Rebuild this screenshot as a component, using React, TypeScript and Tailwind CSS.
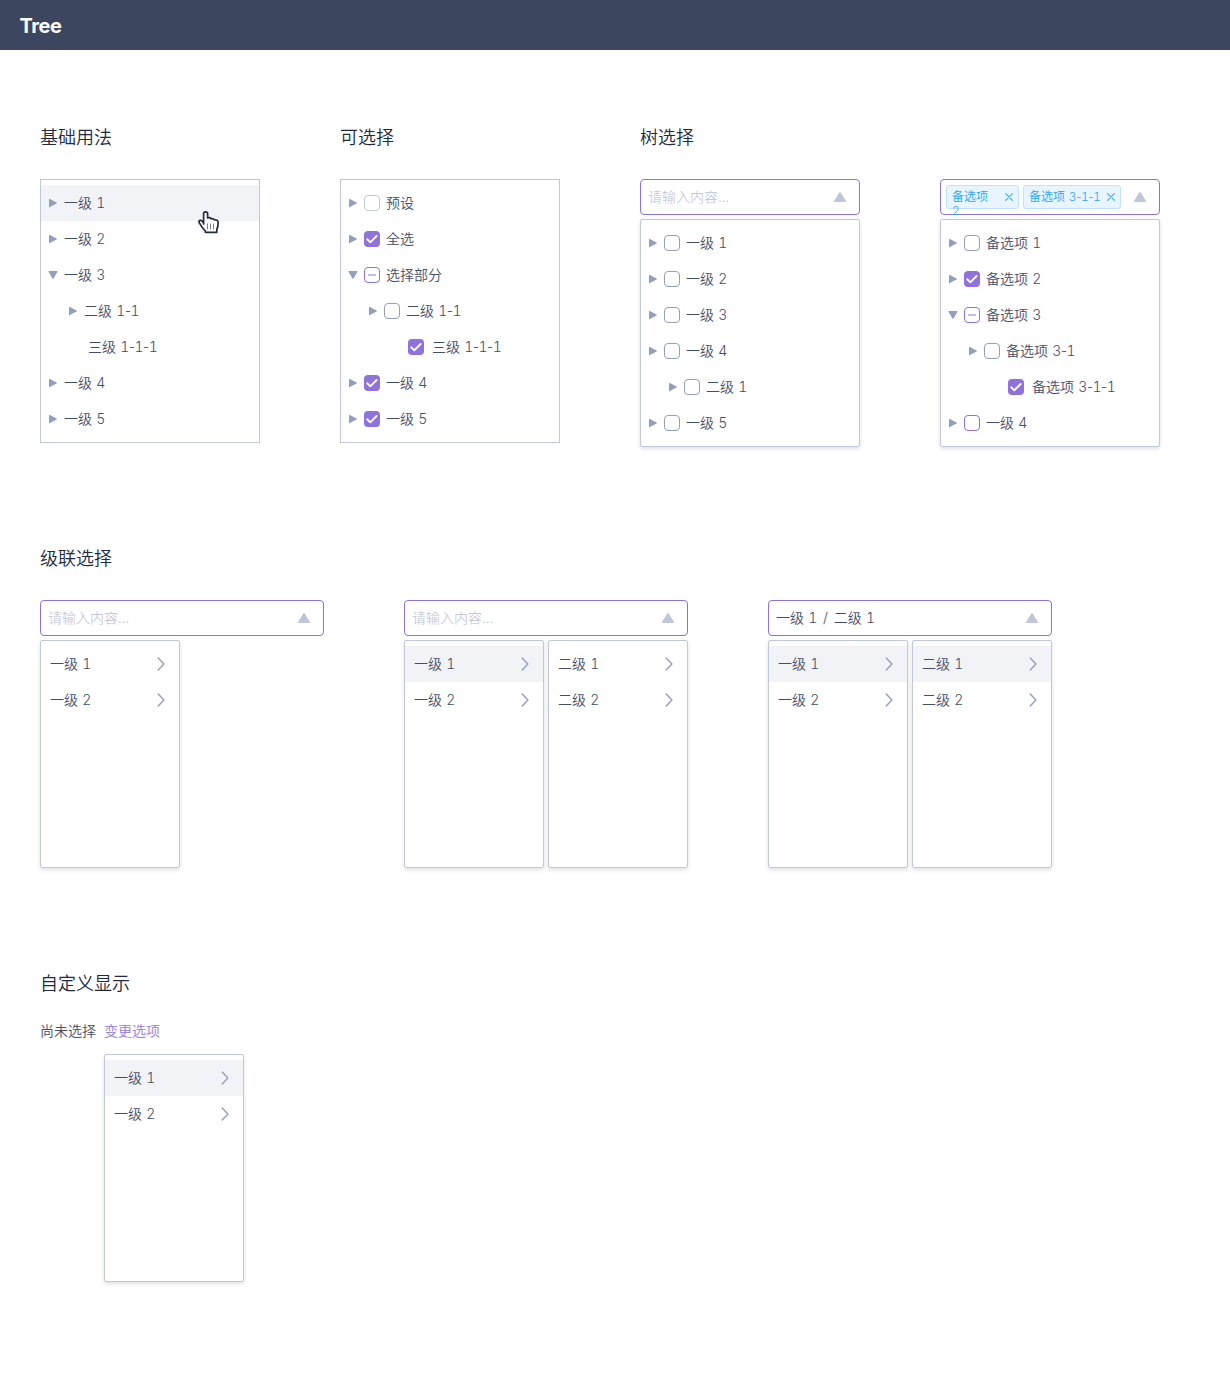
import React from "react";

type Box = "light" | "empty" | "purple" | "checked" | "partial";
type Arrow = "right" | "down";

interface Node {
  label: string;
  level?: number;
  arrow?: Arrow;
  box?: Box;
  active?: boolean;
}

function TreeArrow({ dir }: { dir: Arrow }) {
  return dir === "right" ? (
    <svg className="block h-3 w-3 shrink-0" viewBox="0 0 12 12" fill="#939fbc">
      <path d="M2 2.3Q2 1.5 2.9 1.9L9.5 5.4Q10.4 6 9.5 6.6L2.9 10.1Q2 10.5 2 9.7Z" />
    </svg>
  ) : (
    <svg className="block h-3 w-3 shrink-0" viewBox="0 0 12 12" fill="#939fbc">
      <path d="M2.1 2.1H9.9Q10.8 2.1 10.3 3L6.6 9.5Q6 10.3 5.4 9.5L1.7 3Q1.2 2.1 2.1 2.1Z" />
    </svg>
  );
}

function Checkbox({ kind }: { kind: Box }) {
  if (kind === "checked") {
    return (
      <span className="flex size-4 shrink-0 items-center justify-center rounded bg-[#8f72db]">
        <svg className="block size-4" viewBox="0 0 16 16" fill="none" stroke="#fff" strokeWidth="1.9" strokeLinecap="round" strokeLinejoin="round">
          <path d="M3.2 8.3L6.3 11.3L12.6 5" />
        </svg>
      </span>
    );
  }
  if (kind === "partial") {
    return (
      <span className="flex size-4 shrink-0 items-center justify-center rounded border border-[#8f72db] bg-white">
        <span className="h-[2px] w-2 bg-[#c7b8ed]" />
      </span>
    );
  }
  const border =
    kind === "light" ? "border-[#c0c8dc]" : kind === "purple" ? "border-[#8f72db]" : "border-[#939fbc]";
  return <span className={`size-4 shrink-0 rounded border bg-white ${border}`} />;
}

/* Tabular figures widen hyphens and slashes too, so those get their own side spacing. */
function Label({ text }: { text: string }) {
  return (
    <>
      {text.split(/([-/])/).map((part, i) =>
        part === "-" ? (
          <span key={i} className="-mx-[0.14em]">
            -
          </span>
        ) : part === "/" ? (
          <span key={i} className="mx-[1.5px]">
            /
          </span>
        ) : (
          part
        ),
      )}
    </>
  );
}

const indents = ["pl-[6px]", "pl-[26px]", "pl-[47px]", "pl-[67px]"];

function Row({ node }: { node: Node }) {
  return (
    <li className={`flex h-9 items-center ${indents[node.level ?? 0]} ${node.active ? "bg-[#f2f3f7]" : ""}`}>
      {node.arrow && <TreeArrow dir={node.arrow} />}
      {node.box && (
        <span className={node.arrow ? "ml-[5px] flex" : "flex"}>
          <Checkbox kind={node.box} />
        </span>
      )}
      <span className={node.arrow ? (node.box ? "ml-[6px]" : "ml-[5px]") : node.box ? "ml-2" : ""}>
        <Label text={node.label} />
      </span>
    </li>
  );
}

function Tree({ nodes, floating }: { nodes: Node[]; floating?: boolean }) {
  return (
    <ul
      className={`w-[220px] border border-[#c0c8dc] bg-white py-[5px] ${
        floating ? "mt-1 rounded-[2px] shadow-[0_2px_4px_rgba(0,0,0,0.12)]" : ""
      }`}
    >
      {nodes.map((n, i) => (
        <Row key={i} node={n} />
      ))}
    </ul>
  );
}

function Select({ value, placeholder, children }: { value?: string; placeholder?: string; children?: React.ReactNode }) {
  return (
    <div className="flex h-9 w-full items-center rounded border border-[#8f72db] bg-white pr-[13px]">
      {children ?? (
        <span className={`flex-1 pl-[7px] ${value ? "" : "font-light text-[#b9c0d6]"}`}>
          <Label text={value ?? placeholder ?? ""} />
        </span>
      )}
      <svg className="ml-auto block h-3 w-3 shrink-0" viewBox="0 0 12 12" fill="#c0c6d9">
        <path d="M5.2 1.6Q6 .7 6.8 1.6L11.8 9.8Q12.2 11 11.2 11H.8Q-.2 11 .2 9.8Z" />
      </svg>
    </div>
  );
}

function Tag({ label, wrap }: { label: string; wrap?: boolean }) {
  return (
    <span
      className={`flex h-6 items-start rounded-[3px] border border-[#bfe2fd] bg-[#e8f5ff] pr-[5px] pl-[5px] text-[#2ba6fa] ${
        wrap ? "w-[73px]" : "w-[98px]"
      }`}
    >
      <span className={`mt-[4px] text-[12px] leading-[14px] ${wrap ? "w-10" : "whitespace-nowrap"}`}>
        <Label text={label} />
      </span>
      <svg className="mt-[7px] ml-auto block size-2 shrink-0" viewBox="0 0 8 8" stroke="#35abfb" strokeWidth="1.1" strokeLinecap="round">
        <path d="M.6 .6L7.4 7.4M7.4 .6L.6 7.4" />
      </svg>
    </span>
  );
}

function Menu({ items, active }: { items: string[]; active?: number }) {
  return (
    <ul className="h-[228px] w-[140px] rounded-[2px] border border-[#c0c8dc] bg-white py-[5px] shadow-[0_2px_4px_rgba(0,0,0,0.12)]">
      {items.map((t, i) => (
        <li key={t} className={`flex h-9 items-center justify-between pr-[14px] pl-[9px] ${i === active ? "bg-[#f2f3f7]" : ""}`}>
          {t}
          <svg className="block h-[14px] w-2" viewBox="0 0 8 14" fill="none" stroke="#939fbc" strokeWidth="1.4" strokeLinecap="round" strokeLinejoin="round">
            <path d="M1.2 1L6.9 7L1.2 13" />
          </svg>
        </li>
      ))}
    </ul>
  );
}

function Heading({ children }: { children?: React.ReactNode }) {
  return <h2 className="h-[26px] text-[18px] leading-[28px] font-[350] text-[#212a3f]">{children}</h2>;
}

function Hand() {
  return (
    <svg className="absolute top-[32px] left-[158px] h-[23px] w-[22px]" viewBox="0 0 22 23" fill="#fff" stroke="#212a3f" strokeWidth="1.7" strokeLinejoin="round" strokeLinecap="round">
      <path d="M5.6 13V2.8Q5.6 .9 7.6 .9Q9.6 .9 9.6 2.8V7Q12 6.2 13 7.8Q15.2 7.2 16.2 8.8Q20.3 8.3 20.2 12Q20.1 15.5 18.8 18.6V21.3H7.4V20Q5 17.6 3.4 15.1L1.2 11.8Q.6 10 2 9.4Q3.4 8.9 4.4 10.4L5.6 12" />
      <path d="M9.5 13V18M12.5 13V18M15.5 13V18" strokeWidth=".6" />
    </svg>
  );
}

const basic: Node[] = [
  { label: "一级 1", arrow: "right", active: true },
  { label: "一级 2", arrow: "right" },
  { label: "一级 3", arrow: "down" },
  { label: "二级 1-1", arrow: "right", level: 1 },
  { label: "三级 1-1-1", level: 2 },
  { label: "一级 4", arrow: "right" },
  { label: "一级 5", arrow: "right" },
];

const checkable: Node[] = [
  { label: "预设", arrow: "right", box: "light" },
  { label: "全选", arrow: "right", box: "checked" },
  { label: "选择部分", arrow: "down", box: "partial" },
  { label: "二级 1-1", arrow: "right", box: "empty", level: 1 },
  { label: "三级 1-1-1", box: "checked", level: 3 },
  { label: "一级 4", arrow: "right", box: "checked" },
  { label: "一级 5", arrow: "right", box: "checked" },
];

const selectTree: Node[] = [
  { label: "一级 1", arrow: "right", box: "empty" },
  { label: "一级 2", arrow: "right", box: "empty" },
  { label: "一级 3", arrow: "right", box: "empty" },
  { label: "一级 4", arrow: "right", box: "empty" },
  { label: "二级 1", arrow: "right", box: "empty", level: 1 },
  { label: "一级 5", arrow: "right", box: "empty" },
];

const multiTree: Node[] = [
  { label: "备选项 1", arrow: "right", box: "empty" },
  { label: "备选项 2", arrow: "right", box: "checked" },
  { label: "备选项 3", arrow: "down", box: "partial" },
  { label: "备选项 3-1", arrow: "right", box: "empty", level: 1 },
  { label: "备选项 3-1-1", box: "checked", level: 3 },
  { label: "一级 4", arrow: "right", box: "purple" },
];

const first = ["一级 1", "一级 2"];
const second = ["二级 1", "二级 2"];

export default function App() {
  return (
    <div className="min-h-[1400px] w-[1230px] bg-white font-['Inter','Noto_Sans_CJK_SC',sans-serif] text-[14px] leading-5 font-[350] text-[#434e69] tabular-nums [word-spacing:0.5px]">
      <header className="flex h-[50px] items-center bg-[#3c465e] px-[19.5px] pt-px font-['Inter',sans-serif] text-[20px] font-bold tracking-[-0.02em] text-white">
        Tree
      </header>
      <main className="px-10 pt-[74px]">
        <div className="flex gap-20">
          <section className="w-[220px]">
            <Heading>基础用法</Heading>
            <div className="relative mt-[29px]">
              <Tree nodes={basic} />
              <Hand />
            </div>
          </section>
          <section className="w-[220px]">
            <Heading>可选择</Heading>
            <div className="mt-[29px]">
              <Tree nodes={checkable} />
            </div>
          </section>
          <section>
            <Heading>树选择</Heading>
            <div className="mt-[29px] flex gap-20">
              <div className="w-[220px]">
                <Select placeholder="请输入内容..." />
                <Tree nodes={selectTree} floating />
              </div>
              <div className="w-[220px]">
                <Select>
                  <span className="flex gap-1 pl-[5px]">
                    <Tag label="备选项 2" wrap />
                    <Tag label="备选项 3-1-1" />
                  </span>
                </Select>
                <Tree nodes={multiTree} floating />
              </div>
            </div>
          </section>
        </div>

        <section className="mt-[98px]">
          <Heading>级联选择</Heading>
          <div className="mt-[29px] flex gap-20">
            <div className="w-[284px]">
              <Select placeholder="请输入内容..." />
              <div className="mt-1 flex gap-1">
                <Menu items={first} />
              </div>
            </div>
            <div className="w-[284px]">
              <Select placeholder="请输入内容..." />
              <div className="mt-1 flex gap-1">
                <Menu items={first} active={0} />
                <Menu items={second} />
              </div>
            </div>
            <div className="w-[284px]">
              <Select value="一级 1 / 二级 1" />
              <div className="mt-1 flex gap-1">
                <Menu items={first} active={0} />
                <Menu items={second} active={0} />
              </div>
            </div>
          </div>
        </section>

        <section className="mt-[102px]">
          <Heading>自定义显示</Heading>
          <div className="mt-[25px] flex gap-2">
            <span>尚未选择</span>
            <div>
              <a className="block text-[#9378e0]">变更选项</a>
              <div className="mt-[13px]">
                <Menu items={first} active={0} />
              </div>
            </div>
          </div>
        </section>
      </main>
    </div>
  );
}
